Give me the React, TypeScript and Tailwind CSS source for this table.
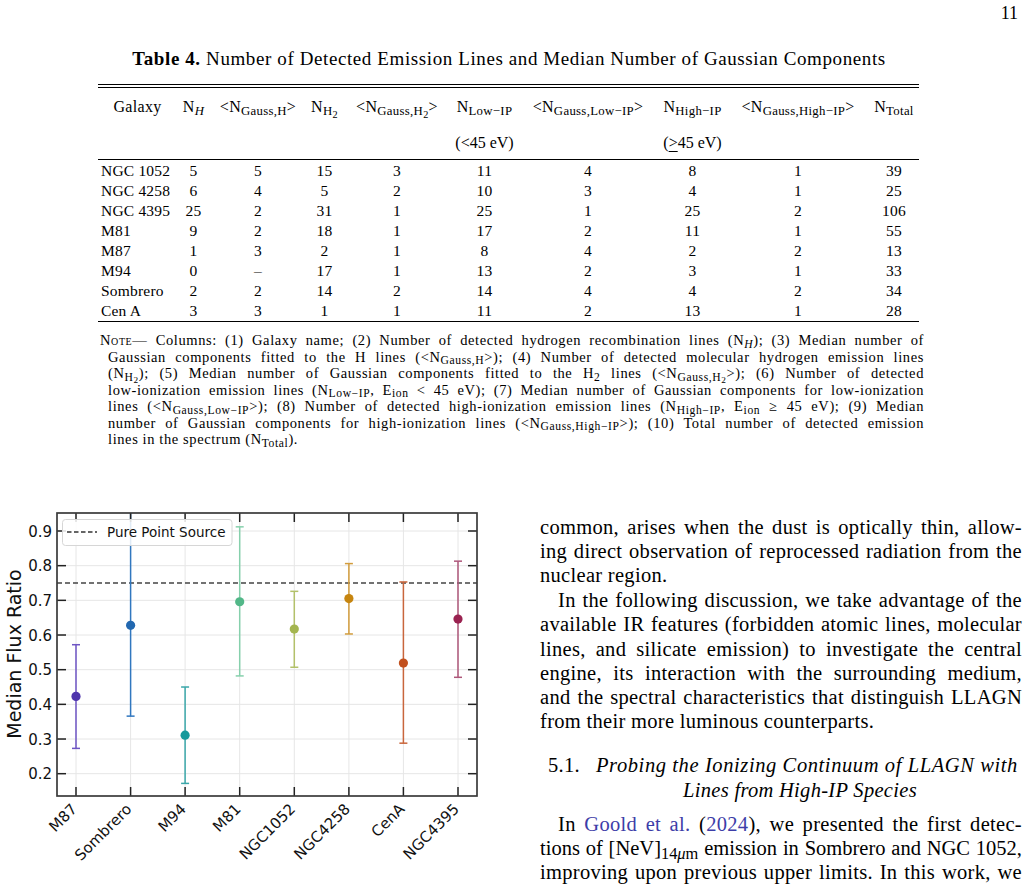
import React from "react";

const cols = "grid grid-cols-[79px_33px_96px_37px_108px_67px_140px_69px_142px_50px]";

const rows: [string, ...string[]][] = [
  ["NGC 1052", "5", "5", "15", "3", "11", "4", "8", "1", "39"],
  ["NGC 4258", "6", "4", "5", "2", "10", "3", "4", "1", "25"],
  ["NGC 4395", "25", "2", "31", "1", "25", "1", "25", "2", "106"],
  ["M81", "9", "2", "18", "1", "17", "2", "11", "1", "55"],
  ["M87", "1", "3", "2", "1", "8", "4", "2", "2", "13"],
  ["M94", "0", "–", "17", "1", "13", "2", "3", "1", "33"],
  ["Sombrero", "2", "2", "14", "2", "14", "4", "4", "2", "34"],
  ["Cen A", "3", "3", "1", "1", "11", "2", "13", "1", "28"],
];

const JLine = ({ children, last = false, className = "" }: { children: React.ReactNode; last?: boolean; className?: string }) => (
  <div className={`${last ? "text-left" : "text-justify [text-align-last:justify]"} ${className}`}>{children}</div>
);

const S = ({ children }: { children: React.ReactNode }) => <sub className="text-[0.8em]">{children}</sub>;

// plot geometry, svg y = page y - 505
const X0 = 57;
const X1 = 477;
const Y0 = 8;
const Y1 = 291;
const yOf = (v: number) => 26 + (0.9 - v) * 346.7;
const xs = [76, 130.6, 185.1, 239.7, 294.3, 348.9, 403.4, 458];
const yticks = [0.2, 0.3, 0.4, 0.5, 0.6, 0.7, 0.8, 0.9];

const points = [
  { name: "M87", v: 0.423, lo: 0.273, hi: 0.572, c: "#4f35ad", bar: "#6e55c4" },
  { name: "Sombrero", v: 0.628, lo: 0.366, hi: 1.0, c: "#2268b0", bar: "#3077bf" },
  { name: "M94", v: 0.311, lo: 0.172, hi: 0.45, c: "#16999b", bar: "#3aa7a9" },
  { name: "M81", v: 0.696, lo: 0.482, hi: 0.912, c: "#52b788", bar: "#86d0ac" },
  { name: "NGC1052", v: 0.617, lo: 0.507, hi: 0.726, c: "#a4b54f", bar: "#b3c16a" },
  { name: "NGC4258", v: 0.705, lo: 0.603, hi: 0.806, c: "#c6850f", bar: "#d29c3c" },
  { name: "CenA", v: 0.519, lo: 0.288, hi: 0.753, c: "#c2501d", bar: "#c9663c" },
  { name: "NGC4395", v: 0.646, lo: 0.478, hi: 0.813, c: "#9a2250", bar: "#ae577a" },
];

const FluxPlot = () => (
  <svg width="510" height="382" viewBox="0 0 510 382" className="shrink-0 font-['DejaVu_Sans',sans-serif]">
    <defs>
      <clipPath id="axes">
        <rect x={X0} y={Y0} width={X1 - X0} height={Y1 - Y0} />
      </clipPath>
    </defs>
    {/* grid */}
    {xs.map((x) => (
      <line key={`gx${x}`} x1={x} x2={x} y1={Y0} y2={Y1} stroke="#e6e6e6" strokeWidth="1" />
    ))}
    {yticks.map((t) => (
      <line key={`gy${t}`} x1={X0} x2={X1} y1={yOf(t)} y2={yOf(t)} stroke="#e6e6e6" strokeWidth="1" />
    ))}
    {/* reference line */}
    <line x1={X0} x2={X1} y1={yOf(0.75)} y2={yOf(0.75)} stroke="#444" strokeWidth="1.5" strokeDasharray="5 3" />
    {/* error bars */}
    <g clipPath="url(#axes)">
      {points.map((p, i) => {
        const x = xs[i];
        return (
          <g key={p.name}>
            <line x1={x} x2={x} y1={yOf(p.hi)} y2={yOf(p.lo)} stroke={p.bar} strokeWidth="1.5" />
            <line x1={x - 4} x2={x + 4} y1={yOf(p.hi)} y2={yOf(p.hi)} stroke={p.bar} strokeWidth="1.5" />
            <line x1={x - 4} x2={x + 4} y1={yOf(p.lo)} y2={yOf(p.lo)} stroke={p.bar} strokeWidth="1.5" />
            <circle cx={x} cy={yOf(p.v)} r="4.6" fill={p.c} />
          </g>
        );
      })}
    </g>
    {/* ticks */}
    {xs.map((x) => (
      <g key={`tx${x}`} stroke="#222" strokeWidth="1.5">
        <line x1={x} x2={x} y1={Y1} y2={Y1 - 9} />
        <line x1={x} x2={x} y1={Y0} y2={Y0 + 9} />
      </g>
    ))}
    {yticks.map((t) => (
      <g key={`ty${t}`} stroke="#222" strokeWidth="1.5">
        <line x1={X0} x2={X0 + 9} y1={yOf(t)} y2={yOf(t)} />
        <line x1={X1} x2={X1 - 9} y1={yOf(t)} y2={yOf(t)} />
      </g>
    ))}
    <rect x={X0} y={Y0} width={X1 - X0} height={Y1 - Y0} fill="none" stroke="#3a3a3a" strokeWidth="1.7" />
    {/* legend */}
    <rect x="62.5" y="14.5" width="169.5" height="26" rx="3" fill="#fff" fillOpacity="0.85" stroke="#d6d6d6" strokeWidth="1" />
    <line x1="67" x2="97" y1="27" y2="27" stroke="#333" strokeWidth="1.5" strokeDasharray="4.5 2.5" />
    <text x="107" y="32" fontSize="13.5" fill="#111">Pure Point Source</text>
    {/* tick labels */}
    {yticks.map((t) => (
      <text key={`ly${t}`} x="52" y={yOf(t) + 5.5} fontSize="15" textAnchor="end" fill="#111">
        {t.toFixed(1)}
      </text>
    ))}
    {points.map((p, i) => (
      <text
        key={`lx${p.name}`}
        x={xs[i] + 2}
        y={Y1 + 14}
        fontSize="15"
        textAnchor="end"
        fill="#111"
        transform={`rotate(-45 ${xs[i] + 2} ${Y1 + 14})`}
      >
        {p.name}
      </text>
    ))}
    <text x="21" y="149" fontSize="19" textAnchor="middle" fill="#111" transform="rotate(-90 21 149)">
      Median Flux Ratio
    </text>
  </svg>
);

export default function App() {
  return (
    <div className="w-[1028px] h-[887px] overflow-hidden bg-white text-black font-['Liberation_Serif','Times_New_Roman',serif]">
      <div className="h-[24px] pt-[3px] pr-[10px] text-right text-[18px] leading-[20px]">11</div>

      {/* caption */}
      <div className="mt-[24px] h-[22px] text-center text-[19px] leading-[22px] tracking-[0.6px] pr-[10px]">
        <span className="font-bold">Table 4.</span> Number of Detected Emission Lines and Median Number of Gaussian Components
      </div>

      {/* table */}
      <div className="ml-[98px] mt-[14px] w-[821px] text-[15.5px]">
        <div className="h-px bg-black" />
        <div className="mt-[2px] h-px bg-black" />
        <div className={`${cols} h-[38px] items-center text-center text-[16px] tracking-[0.3px] whitespace-nowrap`}>
          <div>Galaxy</div>
          <div>N<S><i>H</i></S></div>
          <div>&lt;N<S>Gauss,H</S>&gt;</div>
          <div>N<S>H<S>2</S></S></div>
          <div>&lt;N<S>Gauss,H<S>2</S></S>&gt;</div>
          <div>N<S>Low−IP</S></div>
          <div>&lt;N<S>Gauss,Low−IP</S>&gt;</div>
          <div>N<S>High−IP</S></div>
          <div>&lt;N<S>Gauss,High−IP</S>&gt;</div>
          <div>N<S>Total</S></div>
        </div>
        <div className={`${cols} h-[33px] items-center text-center text-[16px]`}>
          <div />
          <div />
          <div />
          <div />
          <div />
          <div>(&lt;45 eV)</div>
          <div />
          <div>(<span className="underline underline-offset-[3px]">&gt;</span>45 eV)</div>
          <div />
          <div />
        </div>
        <div className="h-px bg-black" />
        <div className="pt-[1px] tracking-[0.2px]">
          {rows.map((r) => (
            <div key={r[0]} className={`${cols} h-[20px] items-center leading-[20px]`}>
              {r.map((cell, j) => (
                <div key={j} className={j === 0 ? "pl-[3px] text-left" : "text-center"}>
                  {cell}
                </div>
              ))}
            </div>
          ))}
        </div>
        <div className="h-px bg-black" />
      </div>

      {/* table note */}
      <div className="ml-[100px] mt-[10px] w-[824px] text-[14.5px] leading-[16.5px] tracking-[0.6px]">
        <JLine>
          <span className="[font-variant:small-caps]">Note</span>— Columns: (1) Galaxy name; (2) Number of detected hydrogen recombination lines (N<S><i>H</i></S>); (3) Median number of
        </JLine>
        <JLine className="pl-[8px]">
          Gaussian components fitted to the H lines (&lt;N<S>Gauss,H</S>&gt;); (4) Number of detected molecular hydrogen emission lines
        </JLine>
        <JLine className="pl-[8px]">
          (N<S>H<S>2</S></S>); (5) Median number of Gaussian components fitted to the H<S>2</S> lines (&lt;N<S>Gauss,H<S>2</S></S>&gt;); (6) Number of detected
        </JLine>
        <JLine className="pl-[8px]">
          low-ionization emission lines (N<S>Low−IP</S>, E<S>ion</S> &lt; 45 eV); (7) Median number of Gaussian components for low-ionization
        </JLine>
        <JLine className="pl-[8px]">
          lines (&lt;N<S>Gauss,Low−IP</S>&gt;); (8) Number of detected high-ionization emission lines (N<S>High−IP</S>, E<S>ion</S> ≥ 45 eV); (9) Median
        </JLine>
        <JLine className="pl-[8px]">
          number of Gaussian components for high-ionization lines (&lt;N<S>Gauss,High−IP</S>&gt;); (10) Total number of detected emission
        </JLine>
        <JLine last className="pl-[8px]">
          lines in the spectrum (N<S>Total</S>).
        </JLine>
      </div>

      {/* figure + text column */}
      <div className="mt-[57px] flex">
        <FluxPlot />
        <div className="ml-[30px] w-[482px] pt-[10px] text-[20.5px] leading-[24.2px] tracking-[0.3px]">
          <JLine>common, arises when the dust is optically thin, allow-</JLine>
          <JLine>ing direct observation of reprocessed radiation from the</JLine>
          <JLine last>nuclear region.</JLine>
          <div className="mt-[1px]">
            <JLine className="pl-[18px]">In the following discussion, we take advantage of the</JLine>
            <JLine>available IR features (forbidden atomic lines, molecular</JLine>
            <JLine>lines, and silicate emission) to investigate the central</JLine>
            <JLine>engine, its interaction with the surrounding medium,</JLine>
            <JLine>and the spectral characteristics that distinguish LLAGN</JLine>
            <JLine last>from their more luminous counterparts.</JLine>
          </div>
          <div className="mt-[20px]">
            <div className="pl-[8px] text-left whitespace-nowrap">
              5.1.<span className="ml-[16px] italic tracking-[0.6px]">Probing the Ionizing Continuum of LLAGN with</span>
            </div>
            <div className="pl-[38px] text-center italic">Lines from High-IP Species</div>
          </div>
          <div className="mt-[10px]">
            <JLine className="pl-[18px]">
              In <span className="text-[#3d3da8]">Goold et al.</span> (<span className="text-[#3d3da8]">2024</span>), we presented the first detec-
            </JLine>
            <JLine className="tracking-[0px]">
              tions of [NeV]<S>14<i>μ</i>m</S> emission in Sombrero and NGC&nbsp;1052,
            </JLine>
            <JLine>improving upon previous upper limits. In this work, we</JLine>
          </div>
        </div>
      </div>
    </div>
  );
}
